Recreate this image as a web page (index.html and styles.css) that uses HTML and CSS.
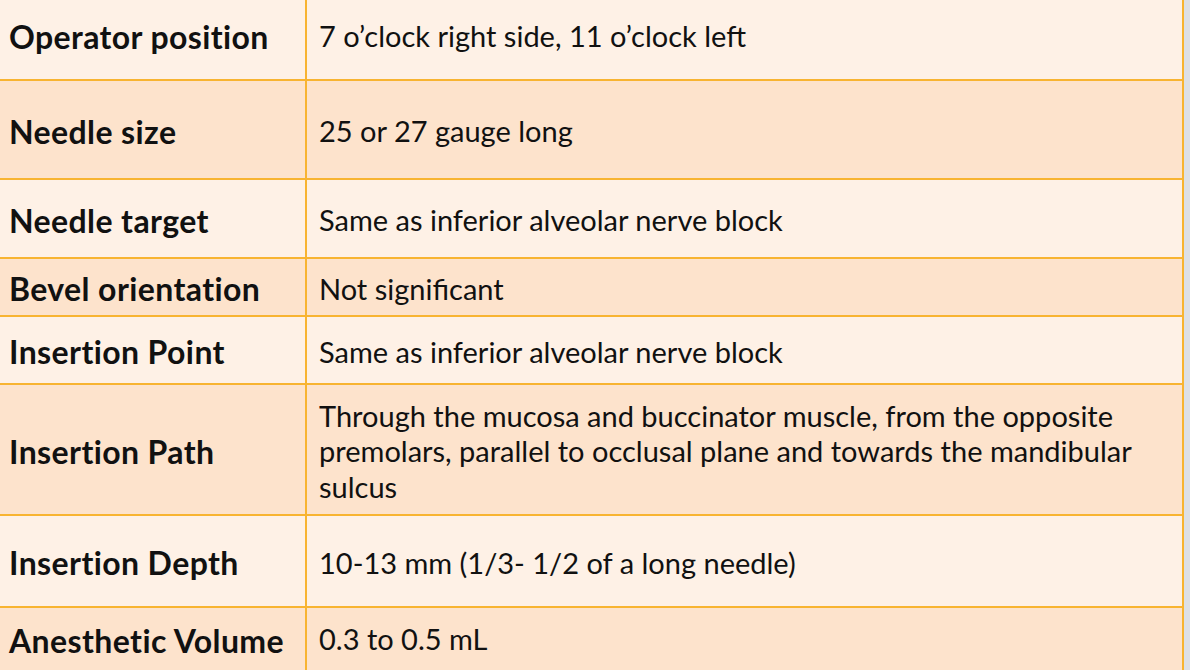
FILE: index.html
```html
<!DOCTYPE html>
<html>
<head>
<meta charset="utf-8">
<link rel="stylesheet" href="styles.css">
</head>
<body>
<div class="table">
  <div class="row light r1"><div class="label">Operator position</div><div class="value">7 o’clock right side, 11 o’clock left</div></div>
  <div class="row peach r2"><div class="label">Needle size</div><div class="value">25 or 27 gauge long</div></div>
  <div class="row light r3"><div class="label">Needle target</div><div class="value">Same as inferior alveolar nerve block</div></div>
  <div class="row peach r4"><div class="label">Bevel orientation</div><div class="value">Not significant</div></div>
  <div class="row light r5"><div class="label">Insertion Point</div><div class="value">Same as inferior alveolar nerve block</div></div>
  <div class="row peach r6"><div class="label">Insertion Path</div><div class="value">Through the mucosa and buccinator muscle, from the opposite premolars, parallel to occlusal plane and towards the mandibular sulcus</div></div>
  <div class="row light r7"><div class="label">Insertion Depth</div><div class="value">10-13 mm (1/3- 1/2 of a long needle)</div></div>
  <div class="row peach r8"><div class="label">Anesthetic Volume</div><div class="value">0.3 to 0.5 mL</div></div>
</div>
</body>
</html>
```

FILE: styles.css
```css
html, body {
  margin: 0;
  padding: 0;
  background: #dde0e6;
  overflow: hidden;
}
body {
  width: 1190px;
  height: 670px;
}
.table {
  width: 1184px;
  margin-top: -10px;
  border-right: 2px solid #f8b431;
  box-sizing: border-box;
  display: flex;
  flex-direction: column;
  font-family: "Lato", "Open Sans", sans-serif;
  color: #111;
}
.row {
  display: flex;
  box-sizing: border-box;
  border-bottom: 2px solid #f8b431;
}
.light { background: #fef1e6; }
.peach { background: #fde3cc; }
.r1 { height: 91px; }
.r2 { height: 99px; }
.r3 { height: 79px; }
.r4 { height: 58px; }
.r5 { height: 68px; }
.r6 { height: 131px; }
.r7 { height: 92px; }
.r8 { height: 80px; border-bottom: none; }
.label {
  width: 307px;
  flex: none;
  box-sizing: border-box;
  border-right: 2px solid #f8b431;
  padding: 3px 0 0 9px;
  display: flex;
  align-items: center;
  font-weight: 700;
  font-size: 32px;
  letter-spacing: 0.4px;
  white-space: nowrap;
}
.value {
  flex: 1;
  padding: 3px 20px 0 12px;
  display: flex;
  align-items: center;
  font-size: 29px;
  line-height: 35.5px;
  font-weight: 400;
}
.r8 .label, .r8 .value { align-items: flex-start; padding-top: 13px; }
```
